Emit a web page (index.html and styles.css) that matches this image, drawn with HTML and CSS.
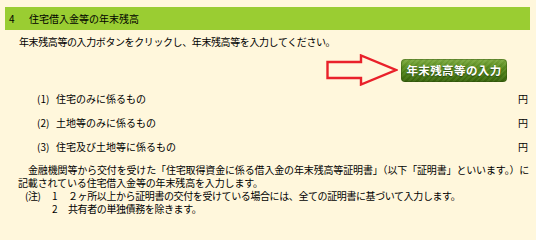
FILE: index.html
```html
<!DOCTYPE html>
<html lang="ja">
<head>
<meta charset="utf-8">
<link rel="stylesheet" href="styles.css">
</head>
<body>
<div class="panel">
  <div class="header"><span class="num">4</span><span>住宅借入金等の年末残高</span></div>
  <p class="intro">年末残高等の入力ボタンをクリックし、年末残高等を入力してください。</p>
  <div class="action">
    <svg class="arrow" width="72" height="32" viewBox="0 0 72 32"><polygon points="1.5,8 35,8 35,1.5 70,16 35,30.5 35,24 1.5,24" fill="none" stroke="#e9212a" stroke-width="2.4"/></svg>
    <button class="btn">年末残高等の入力</button>
  </div>
  <div class="items">
    <div class="item"><span class="lbl"><span class="idx">(1)</span>住宅のみに係るもの</span><span class="yen">円</span></div>
    <div class="item"><span class="lbl"><span class="idx">(2)</span>土地等のみに係るもの</span><span class="yen">円</span></div>
    <div class="item"><span class="lbl"><span class="idx">(3)</span>住宅及び土地等に係るもの</span><span class="yen">円</span></div>
  </div>
  <p class="para">金融機関等から交付を受けた「住宅取得資金に係る借入金の年末残高等証明書」（以下「証明書」といいます。）に<br>記載されている住宅借入金等の年末残高を入力します。</p>
  <div class="notes">
    <div class="note"><span class="nlabel">(注)</span><span class="nnum">1</span><span class="ntext">２ヶ所以上から証明書の交付を受けている場合には、全ての証明書に基づいて入力します。</span></div>
    <div class="note"><span class="nlabel"></span><span class="nnum">2</span><span class="ntext">共有者の単独債務を除きます。</span></div>
  </div>
</div>
</body>
</html>
```

FILE: styles.css
```css
html, body {
  margin: 0;
  background: #fff7dc;
}
body {
  font-family: "Noto Sans CJK JP", "Noto Sans", sans-serif;
  font-size: 10px;
  line-height: 13px;
  color: #000;
  width: 536px;
  height: 229px;
  overflow: hidden;
}
.panel {
  padding: 7px 6px 0 5px;
}
.header {
  height: 23px;
  background: #9acd32;
  display: flex;
  align-items: center;
  padding-left: 4px;
}
.num {
  width: 20px;
}
.intro {
  margin: 5px 0 0 14px;
  white-space: nowrap;
  letter-spacing: -0.4px;
}
.action {
  margin-top: 6px;
  display: flex;
  justify-content: flex-end;
  align-items: center;
  gap: 3px;
  padding-right: 23px;
  height: 32px;
}
.arrow {
  display: block;
}
.btn {
  width: 106px;
  height: 23px;
  border: none;
  border-radius: 4px;
  padding: 0;
  color: #fff;
  font-family: "Noto Sans CJK JP", sans-serif;
  font-weight: bold;
  font-size: 11.5px;
  letter-spacing: 0.4px;
  text-shadow: 0 1px 1px rgba(0, 0, 0, 0.45);
  background:
    repeating-linear-gradient(135deg, rgba(255,255,255,0.05) 0 2px, rgba(0,0,0,0.04) 2px 4px),
    linear-gradient(#80ae42 0%, #5a8e20 35%, #477a13 70%, #38630b 100%);
  box-shadow: inset 0 0 0 1px rgba(40, 70, 10, 0.35);
}
.items {
  margin-top: 6px;
  display: flex;
  flex-direction: column;
  gap: 11px;
}
.item {
  display: flex;
  justify-content: space-between;
  padding-left: 32px;
  padding-right: 2px;
}
.idx {
  display: inline-block;
  width: 19px;
}
.para {
  margin: 10px 0 0 13px;
  text-indent: 10px;
  white-space: nowrap;
  letter-spacing: -0.15px;
}
.notes {
  display: flex;
  flex-direction: column;
  padding-left: 20px;
  white-space: nowrap;
  letter-spacing: -0.4px;
}
.note {
  display: flex;
}
.nlabel {
  flex: 0 0 27px;
}
.nnum {
  flex: 0 0 16px;
}
```
